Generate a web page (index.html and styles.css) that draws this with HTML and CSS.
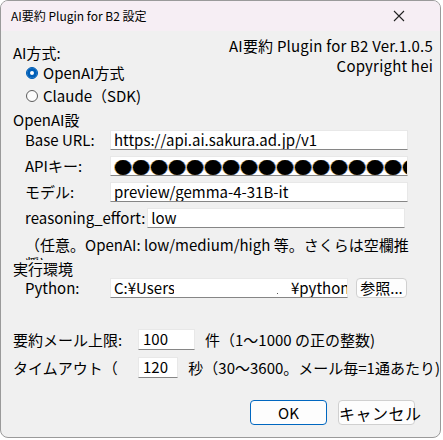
FILE: index.html
```html
<!DOCTYPE html>
<html lang="ja">
<head>
    <meta charset="UTF-8">
    <title>AI要約 Plugin for B2 設定</title>
    <link rel="stylesheet" href="styles.css">
</head>
<body>
    <div class="window">
        <!-- Title bar -->
        <div class="titlebar">
            <span class="title">AI要約 Plugin for B2 設定</span>
            <span class="close">
                <svg width="12" height="12" viewBox="0 0 12 12"><path d="M1 1L11 11M11 1L1 11" stroke="#222" stroke-width="1.1" fill="none"/></svg>
            </span>
        </div>

        <div class="content">
            <!-- AI method + version info -->
            <div class="head">
                <div class="method">
                    <div class="line">AI方式:</div>
                    <div class="radio checked"><span class="dot"></span>OpenAI方式</div>
                    <div class="radio second"><span class="dot"></span>Claude（SDK)</div>
                </div>
                <div class="about">
                    <div>AI要約 Plugin for B2 Ver.1.0.5</div>
                    <div>Copyright hei</div>
                </div>
            </div>

            <!-- OpenAI settings -->
            <div class="group">OpenAI設</div>
            <div class="field">
                <span class="caption">Base URL:</span>
                <div class="edit">https://api.ai.sakura.ad.jp/v1</div>
            </div>
            <div class="field">
                <span class="caption">APIキー:</span>
                <div class="edit secret">
                    <span></span><span></span><span></span><span></span><span></span><span></span>
                    <span></span><span></span><span></span><span></span><span></span><span></span>
                    <span></span><span></span><span></span><span></span><span></span>
                </div>
            </div>
            <div class="field">
                <span class="caption">モデル:</span>
                <div class="edit">preview/gemma-4-31B-it</div>
            </div>
            <div class="field">
                <span class="caption auto">reasoning_effort:</span>
                <div class="edit">low</div>
            </div>
            <div class="note">（任意。OpenAI: low/medium/high 等。さくらは空欄推奨)</div>

            <!-- Runtime -->
            <div class="group env">実行環境</div>
            <div class="field">
                <span class="caption">Python:</span>
                <div class="edit path">
                    <span class="part-a">C:¥Users</span>
                    <span class="speck"></span>
                    <span class="part-b">¥python</span>
                </div>
                <button class="btn browse">参照...</button>
            </div>

            <!-- Limits -->
            <div class="limit first">
                <span class="limit-label">要約メール上限:</span>
                <div class="edit num">100</div>
                <span class="hint">件（1～1000 の正の整数)</span>
            </div>
            <div class="limit">
                <span class="limit-label">タイムアウト（</span>
                <div class="edit num">120</div>
                <span class="hint">秒（30～3600。メール毎=1通あたり)</span>
            </div>

            <!-- Dialog buttons -->
            <div class="actions">
                <button class="btn default">OK</button>
                <button class="btn">キャンセル</button>
            </div>
        </div>
    </div>
</body>
</html>
```

FILE: styles.css
```css
body {
    margin: 0;
    background-color: #ffffff;
    font-family: 'Noto Sans CJK JP', 'Noto Sans', sans-serif;
    color: #000;
}

.window {
    width: 439px;
    height: 436px;
    border: 1px solid #9a9a9a;
    border-radius: 8px;
    background-color: #f0f0f0;
    overflow: hidden;
}

.titlebar {
    height: 30px;
    background-color: #f6eef4;
    display: flex;
    align-items: center;
    justify-content: space-between;
    padding: 0 0 0 10px;
}

.title {
    font-size: 12px;
    line-height: 16px;
}

.close {
    width: 46px;
    height: 30px;
    margin-right: 18px;
    display: flex;
    align-items: center;
    justify-content: center;
}

.content {
    padding: 12px 0 0 12px;
    font-size: 15px;
    line-height: 20px;
    white-space: nowrap;
}

.head {
    display: flex;
    justify-content: space-between;
}

.line {
    height: 20px;
}

.radio {
    height: 20px;
    display: flex;
    align-items: center;
    padding-left: 13px;
}

.radio.second {
    margin-top: 3px;
}

.dot {
    width: 10px;
    height: 10px;
    border: 1px solid #5c5c5c;
    border-radius: 50%;
    margin-right: 5px;
    background-color: #fbfbfb;
    box-sizing: content-box;
}

.radio.checked .dot {
    border-color: #005fb8;
    background-color: #005fb8;
    box-shadow: inset 0 0 0 3px #005fb8, inset 0 0 0 5px #ffffff;
}

.about {
    text-align: right;
    margin-right: 7px;
    margin-top: -7px;
    letter-spacing: 0.2px;
}

.group {
    margin-top: 4px;
    height: 20px;
}

.field {
    display: flex;
    align-items: center;
    height: 20px;
    margin-bottom: 6px;
    padding-left: 12px;
}

.caption {
    width: 85px;
    flex: none;
}

.caption.auto {
    width: auto;
    margin-right: 2px;
}

.edit {
    width: 298px;
    height: 20px;
    box-sizing: border-box;
    background-color: #fff;
    border: 1px solid #e8e8e8;
    border-bottom-color: #868686;
    padding-left: 3px;
    line-height: 18px;
    overflow: hidden;
}

.caption.auto + .edit {
    width: 258px;
}

.secret {
    display: flex;
    align-items: flex-end;
    gap: 2px;
    padding-left: 4px;
}

.secret span {
    flex: none;
    width: 16px;
    height: 15px;
    border-radius: 50%;
    background-color: #000;
    box-shadow: -1px 0 0 #e7a33b, 1px 0 0 #2f78d6;
}

.note {
    padding: 1px 0 0 12px;
    width: 390px;
    height: 25px;
    overflow: hidden;
    white-space: normal;
    line-height: 19px;
}

.group.env {
    margin-top: 0;
    height: 18px;
    line-height: 18px;
}

.path {
    width: 238px;
    display: flex;
}

.part-a {
    width: 60px;
    overflow: hidden;
    flex: none;
}

.speck {
    width: 1px;
    height: 1px;
    background-color: #555;
    margin: 14px 0 0 103px;
    flex: none;
}

.part-b {
    margin-left: 13px;
    flex: none;
}

.btn {
    font-family: inherit;
    font-size: 15px;
    height: 20px;
    padding: 0;
    background-color: #fdfdfd;
    border: 1px solid #d0d0d0;
    border-radius: 4px;
    color: #000;
}

.browse {
    width: 51px;
    margin-left: 8px;
    line-height: 16px;
}

.limit {
    display: flex;
    align-items: center;
    height: 21px;
    margin-top: 7px;
}

.limit.first {
    margin-top: 31px;
}

.limit-label {
    width: 125px;
    flex: none;
}

.edit.num {
    width: 57px;
    height: 21px;
    padding-left: 4px;
}

.hint {
    margin-left: 10px;
}

.actions {
    display: flex;
    justify-content: flex-end;
    gap: 11px;
    margin-top: 22px;
    padding-right: 25px;
}

.actions .btn {
    width: 77px;
    height: 25px;
    line-height: 20px;
}

.actions .btn:last-child {
    font-size: 16px;
    letter-spacing: 0.5px;
}

.btn.default {
    border-color: #0067c0;
}
```
